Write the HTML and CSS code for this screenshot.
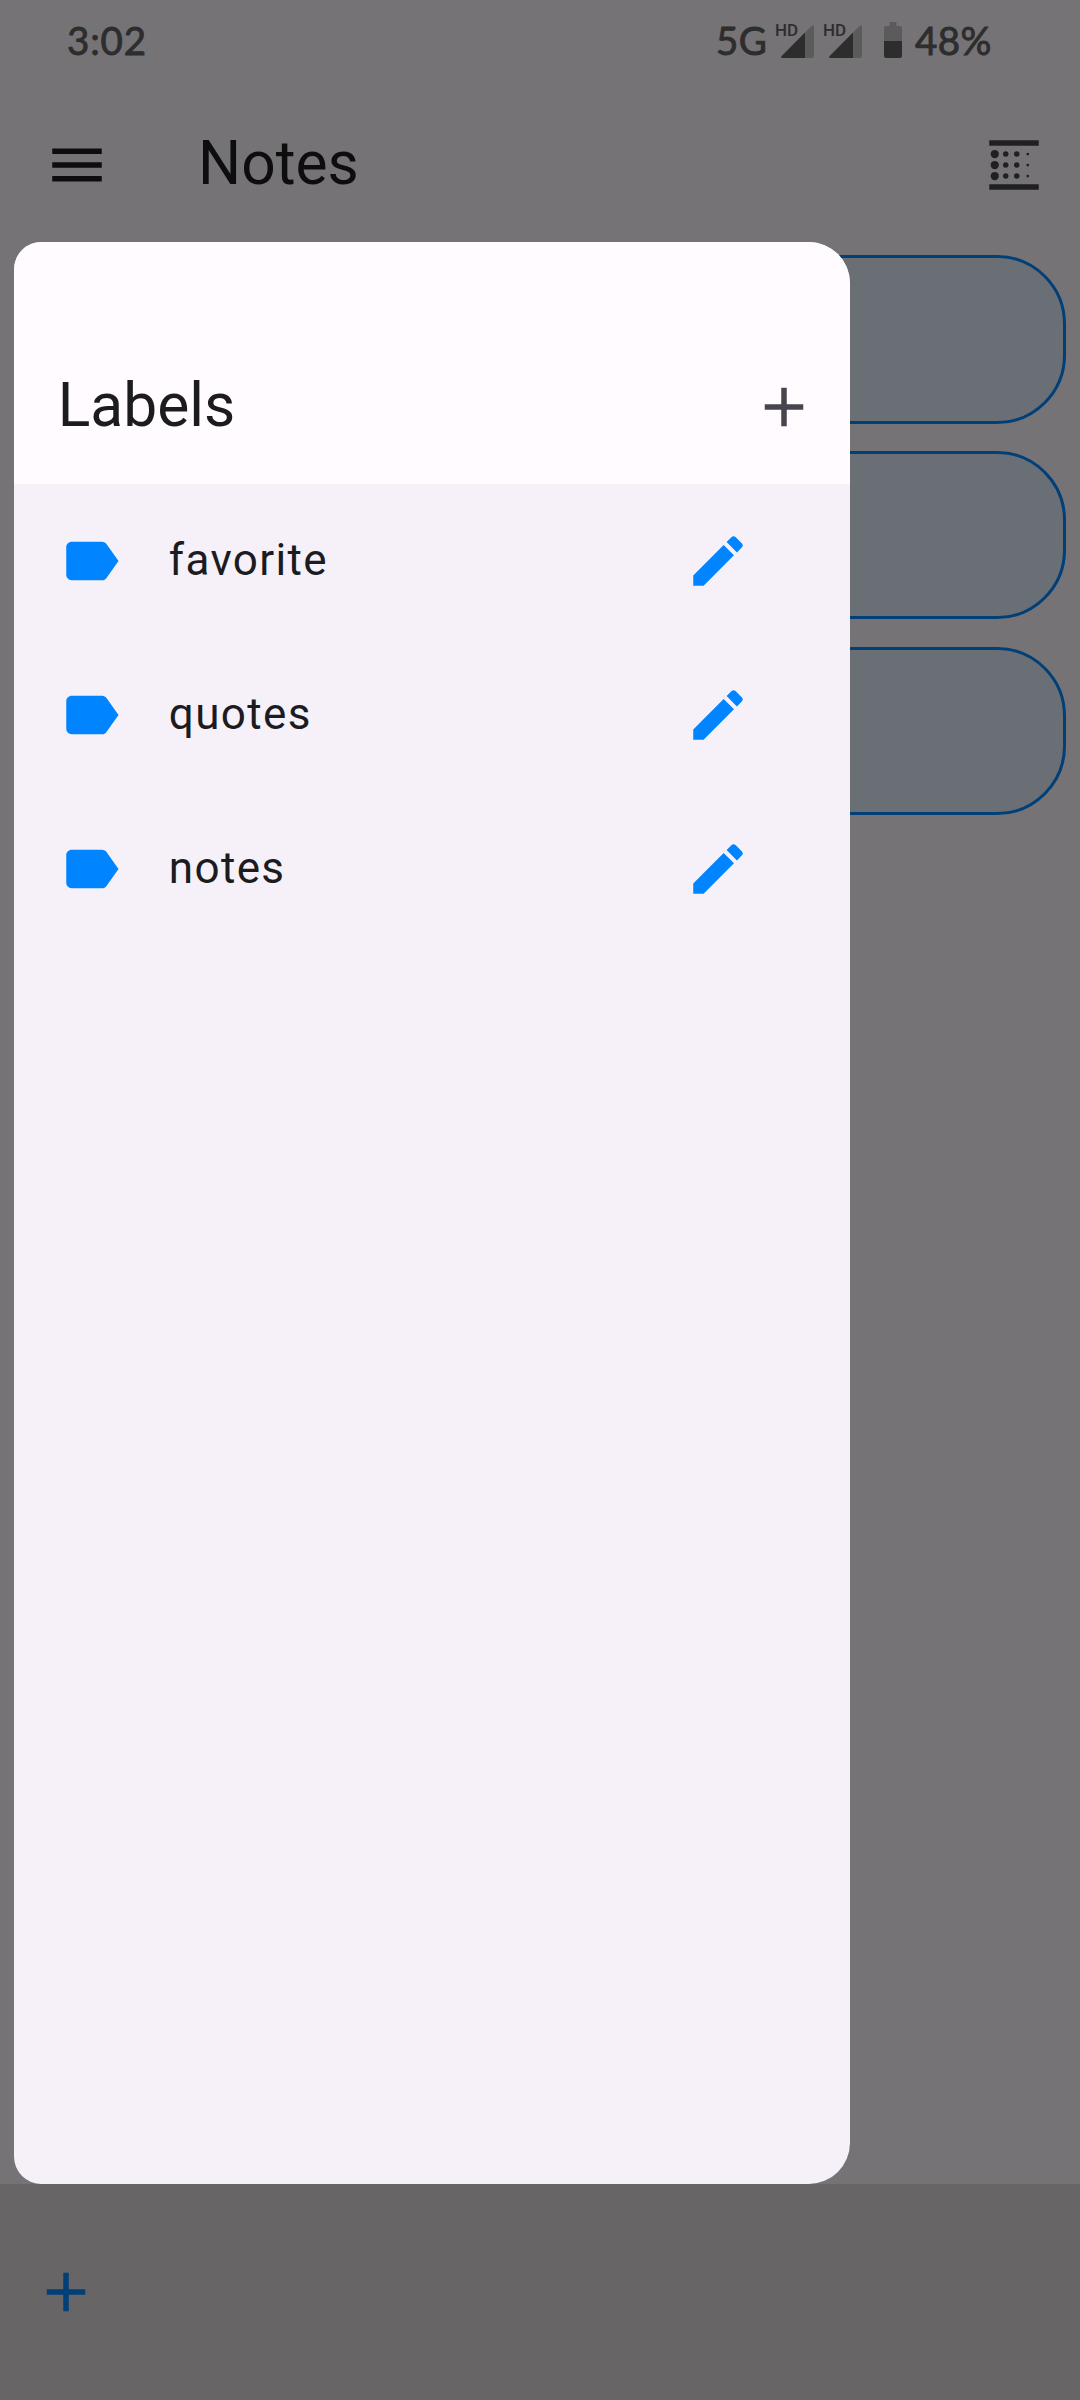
FILE: index.html
```html
<!DOCTYPE html>
<html lang="en">
<head>
<meta charset="utf-8">
<title>Notes</title>
<link rel="stylesheet" href="styles.css">
</head>
<body>
<svg class="defs" width="0" height="0" aria-hidden="true">
  <symbol id="label" viewBox="0 0 24 24"><path d="M17.63 5.84C17.27 5.33 16.67 5 16 5L5 5.01C3.9 5.01 3 5.9 3 7v10c0 1.1.9 1.99 2 1.99L16 19c.67 0 1.27-.33 1.63-.84L22 12l-4.37-6.16z"/></symbol>
  <symbol id="edit" viewBox="0 0 24 24"><path d="M3 17.25V21h3.75L17.81 9.94l-3.75-3.75L3 17.25zM20.71 7.04c.39-.39.39-1.02 0-1.41l-2.34-2.34c-.39-.39-1.02-.39-1.41 0l-1.83 1.83 3.75 3.75 1.83-1.83z"/></symbol>
  <symbol id="add" viewBox="0 0 24 24"><path d="M19 13h-6v6h-2v-6H5v-2h6V5h2v6h6v2z"/></symbol>
  <symbol id="signal" viewBox="0 0 40 40">
    <path class="faint" d="M29 12.500 35.500 6q2.500-2 2.500 1V36q0 2-2 2H29z"/>
    <path d="M29 12.500V38H6.500q-2.500 0-.8-2z"/>
  </symbol>
</svg>
<div class="screen">
  <header class="status">
    <span class="time">3:02</span>
    <span class="network">5G</span>
    <span class="sim"><svg><use href="#signal"/></svg><span class="hd">HD</span></span>
    <span class="sim"><svg><use href="#signal"/></svg><span class="hd">HD</span></span>
    <svg class="battery" viewBox="0 0 18 36">
      <path class="faint" d="M5.500 0h7v4H16q2 0 2 2v13H0V6q0-2 2-2h3.500z"/>
      <path d="M0 19h18v15q0 2-2 2H2q-2 0-2-2z"/>
    </svg>
    <span class="percent">48%</span>
  </header>
  <div class="appbar">
    <svg class="icon" viewBox="0 0 24 24"><path d="M3 18h18v-2H3v2zm0-5h18v-2H3v2zm0-7v2h18V6H3z"/></svg>
    <h1 class="title">Notes</h1>
    <svg class="icon view" viewBox="0 0 24 24">
      <path d="M3 3h18v2H3zM3 19h18v2H3z"/>
      <circle cx="5" cy="8" r="1.500"/><circle cx="5" cy="12" r="1.500"/><circle cx="5" cy="16" r="1.500"/>
      <circle cx="9" cy="8" r="1"/><circle cx="9" cy="12" r="1"/><circle cx="9" cy="16" r="1"/>
      <circle cx="13" cy="8" r="1"/><circle cx="13" cy="12" r="1"/><circle cx="13" cy="16" r="1"/>
      <circle cx="17" cy="8" r=".5"/><circle cx="17" cy="12" r=".5"/><circle cx="17" cy="16" r=".5"/>
    </svg>
  </div>
  <main class="notes">
    <div class="note"></div>
    <div class="note"></div>
    <div class="note"></div>
  </main>
  <footer class="bottombar"><svg class="icon"><use href="#add"/></svg></footer>

  <aside class="drawer">
    <div class="drawer-head">
      <h2 class="title">Labels</h2>
      <svg class="icon"><use href="#add"/></svg>
    </div>
    <ul class="labels">
      <li class="row"><svg class="icon"><use href="#label"/></svg><span class="name">favorite</span><svg class="icon"><use href="#edit"/></svg></li>
      <li class="row"><svg class="icon"><use href="#label"/></svg><span class="name">quotes</span><svg class="icon"><use href="#edit"/></svg></li>
      <li class="row"><svg class="icon"><use href="#label"/></svg><span class="name">notes</span><svg class="icon"><use href="#edit"/></svg></li>
    </ul>
  </aside>
</div>
</body>
</html>
```
FILE: styles.css
```css
* { box-sizing: border-box; }
body { margin: 0; font-family: Roboto, sans-serif; }
.defs { position: absolute; }
svg { display: block; fill: currentColor; flex: none; }
.icon { width: 66px; height: 66px; }

.screen {
  position: relative;
  display: flex;
  flex-direction: column;
  width: 1080px;
  height: 2400px;
  overflow: hidden;
  background: #757376;
}

.status {
  display: flex;
  align-items: center;
  height: 80px;
  padding-left: 67px;
  color: #2d2d2d;
  font: 400 38.500px/80px Lato, sans-serif;
  -webkit-text-stroke: 0.9px currentColor;
}
.faint { opacity: 0.35; }
.time { width: 649px; letter-spacing: 0.8px; }
.network { width: 58px; white-space: nowrap; letter-spacing: 0.5px; }
.sim { position: relative; width: 48px; }
.sim svg { width: 40px; height: 40px; margin-left: 2px; }
.hd {
  position: absolute;
  left: 1px;
  top: 0;
  font: 500 17px/20px Roboto, sans-serif;
  -webkit-text-stroke: 0;
}
.battery { width: 18px; height: 36px; margin-left: 14px; }
.percent { margin-left: 13px; letter-spacing: 0.4px; }

.appbar {
  display: flex;
  align-items: center;
  height: 168px;
  padding: 2px 33px 0 44px;
  color: #0d0d0e;
}
.title {
  flex: 1;
  margin: 0;
  padding-bottom: 3px;
  font-size: 60.500px;
  font-weight: 400;
  line-height: 76px;
}
.appbar .title { padding-left: 88px; }
.view { color: #202022; }

.notes {
  flex: 1;
  display: flex;
  flex-direction: column;
  gap: 27.500px;
  padding: 7.300px 13.750px 0;
}
.note {
  height: 168.300px;
  border: 3px solid #003f78;
  border-radius: 69px;
  background: #6a6f75;
}

.bottombar {
  height: 216px;
  padding: 75px 33px;
  background: #676566;
  color: #003f78;
}

.drawer {
  position: absolute;
  left: 13.750px;
  top: 242px;
  width: 836px;
  height: 1942px;
  overflow: hidden;
  border-radius: 27.500px 41.250px 41.250px 27.500px;
  background: #f6f1f9;
  color: #1c1b1f;
}
.drawer-head {
  display: flex;
  align-items: center;
  height: 242px;
  padding: 88px 33px 0 44px;
  background: #fffbff;
}
.drawer-head .icon { color: #49454f; }
.labels { margin: 0; padding: 0; list-style: none; }
.row {
  display: flex;
  align-items: center;
  height: 154px;
  padding: 0 99px 0 44px;
}
.row .icon { color: #0084ff; }
.name { flex: 1; padding: 0 0 2px 45px; font-size: 44px; letter-spacing: 1.375px; }
```
